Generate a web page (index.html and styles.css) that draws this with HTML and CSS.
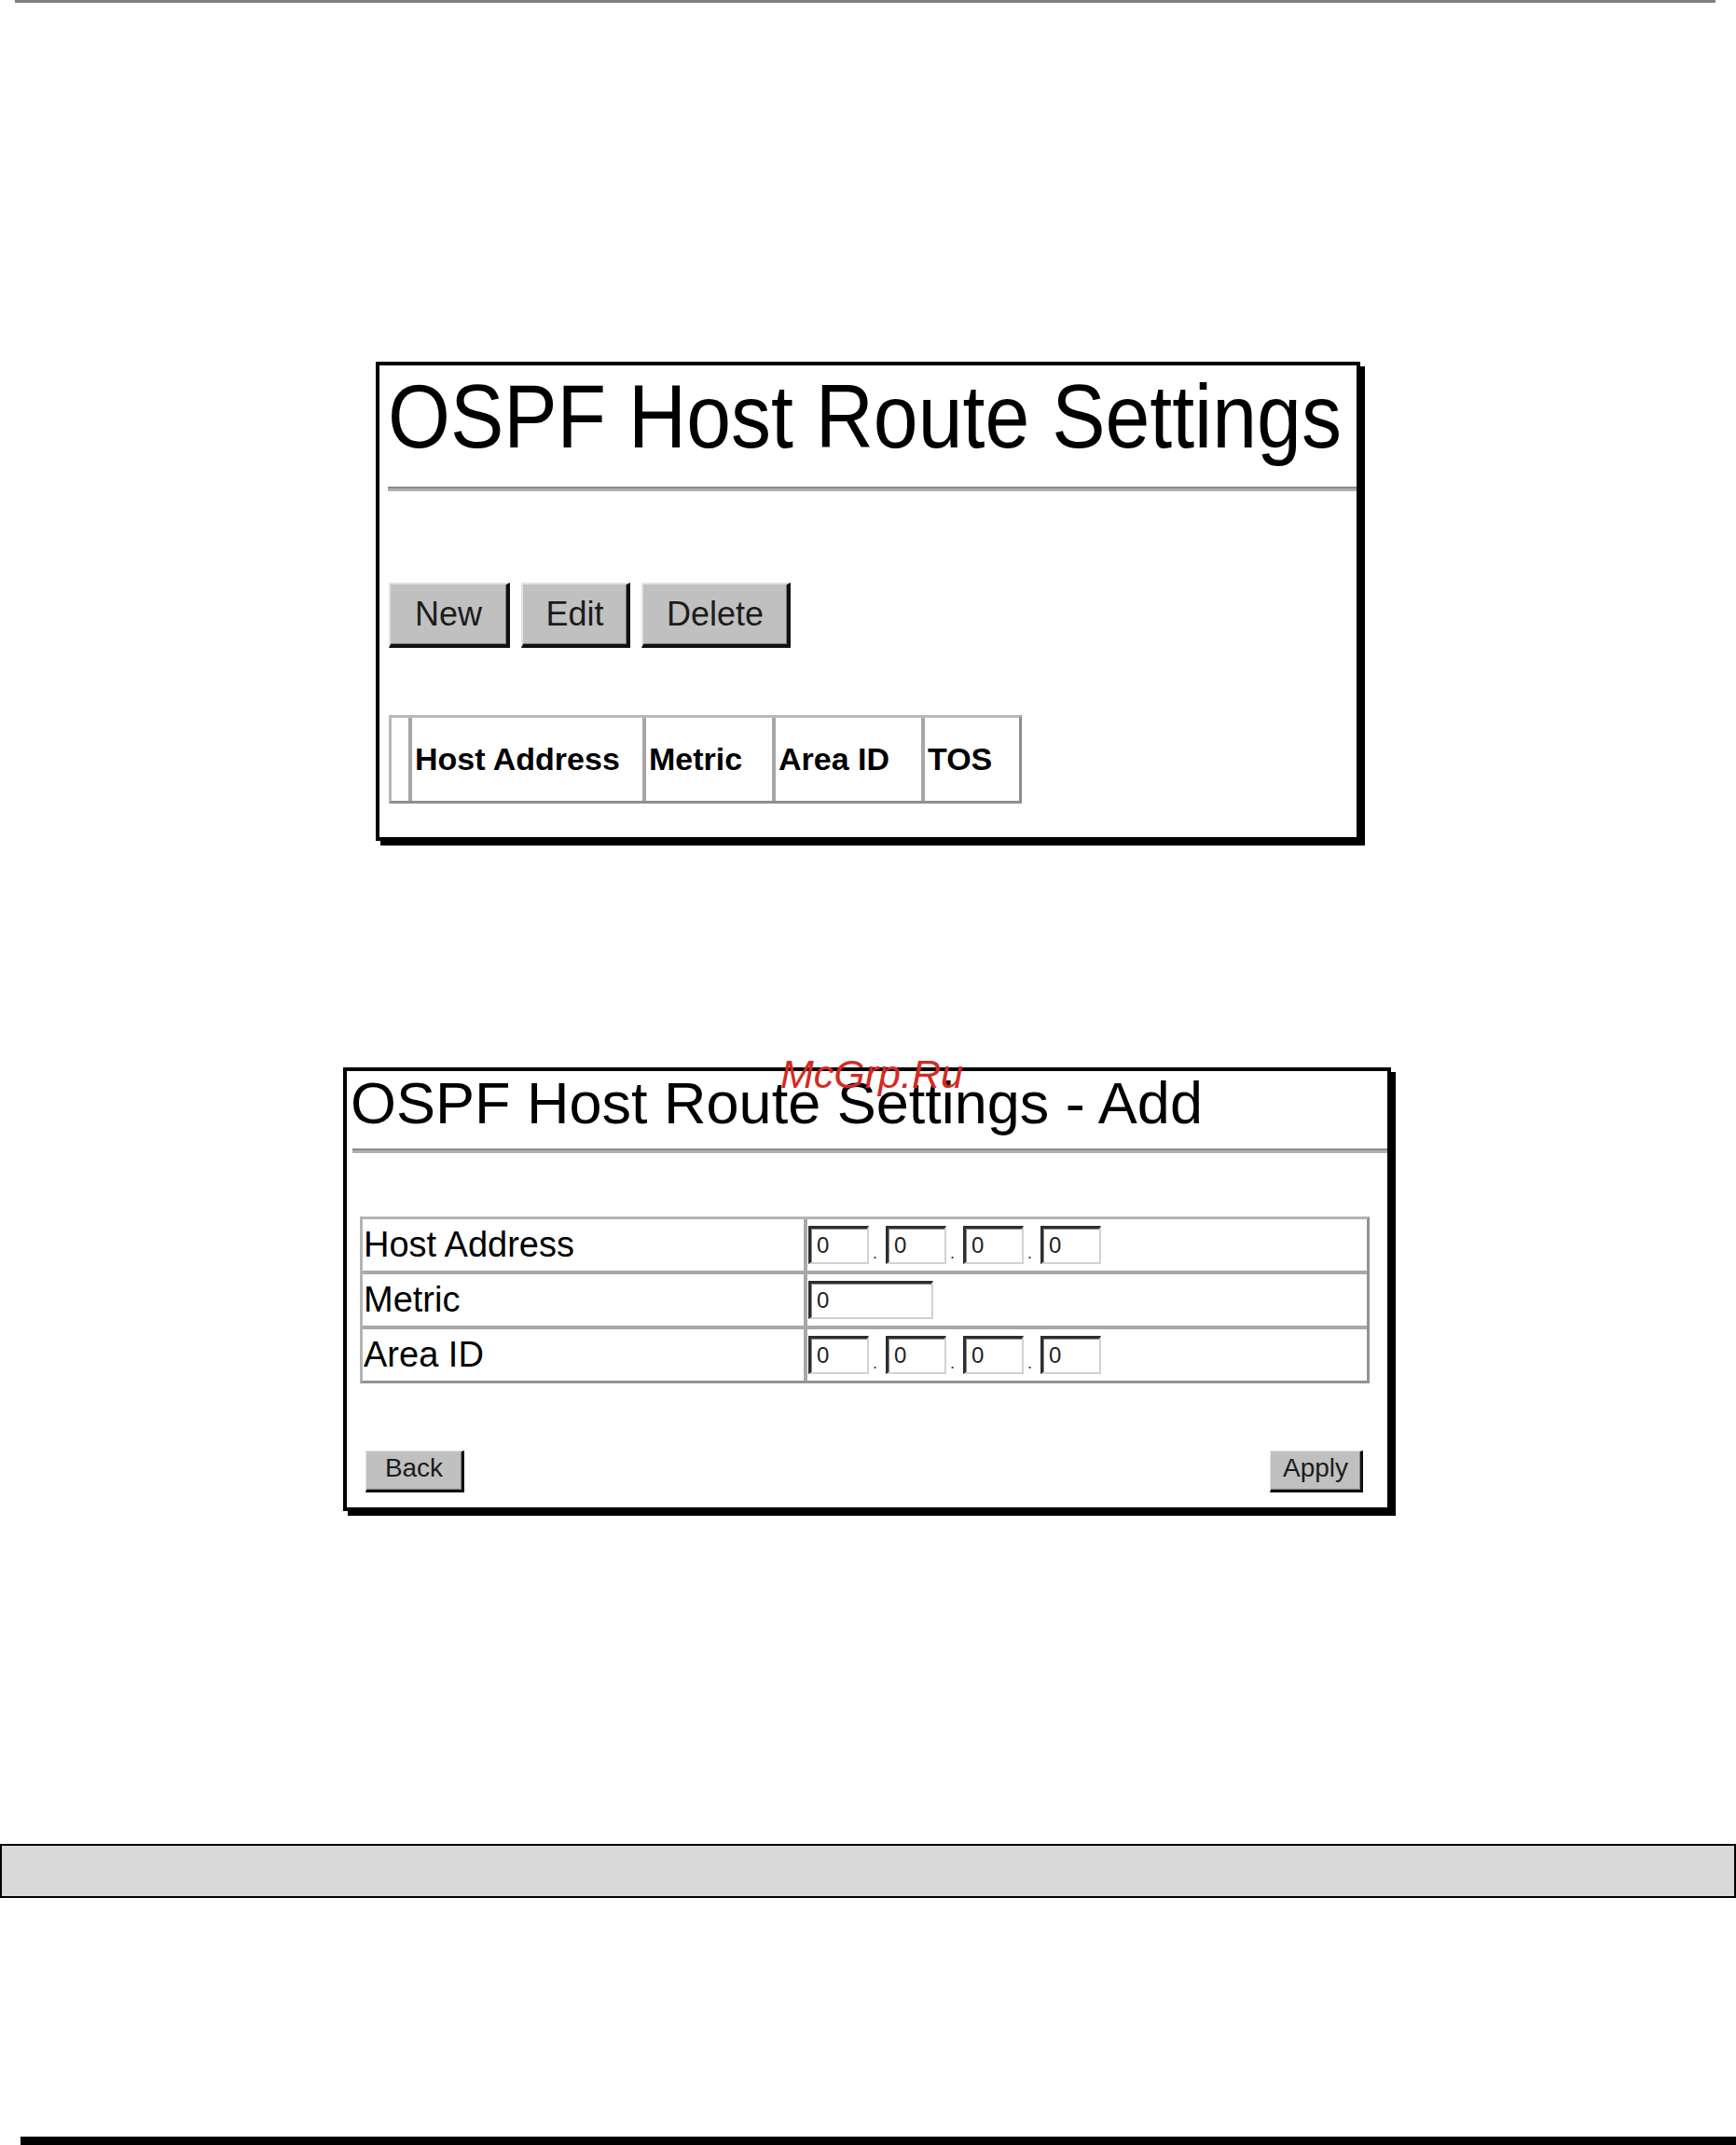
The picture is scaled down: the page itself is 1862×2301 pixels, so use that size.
FILE: index.html
```html
<!DOCTYPE html>
<html lang="en">
<head>
<meta charset="utf-8">
<title>OSPF Host Route Settings</title>
<link rel="stylesheet" href="styles.css">
</head>
<body>
<div class="page">
  <div class="top-rule"></div>

  <section class="panel panel-main">
    <h1 class="title-main"><span>OSPF Host Route Settings</span></h1>
    <div class="rule rule-main"></div>
    <div class="toolbar">
      <button class="btn btn-lg btn-new">New</button>
      <button class="btn btn-lg btn-edit">Edit</button>
      <button class="btn btn-lg btn-delete">Delete</button>
    </div>
    <div class="hdr-table">
      <div class="hcell hc0"></div>
      <div class="hcell hc1">Host Address</div>
      <div class="hcell hc2">Metric</div>
      <div class="hcell hc3">Area ID</div>
      <div class="hcell hc4">TOS</div>
    </div>
  </section>

  <section class="panel panel-add">
    <h2 class="title-add">OSPF Host Route Settings - Add</h2>
    <div class="rule rule-add"></div>
    <div class="form-table">
      <div class="lbl first">Host Address</div>
      <div class="val first">
        <input class="ip-in" type="text" value="0"><span class="sep">.</span><input class="ip-in" type="text" value="0"><span class="sep">.</span><input class="ip-in" type="text" value="0"><span class="sep">.</span><input class="ip-in" type="text" value="0">
      </div>
      <div class="lbl">Metric</div>
      <div class="val">
        <input class="ip-in metric-in" type="text" value="0">
      </div>
      <div class="lbl">Area ID</div>
      <div class="val">
        <input class="ip-in" type="text" value="0"><span class="sep">.</span><input class="ip-in" type="text" value="0"><span class="sep">.</span><input class="ip-in" type="text" value="0"><span class="sep">.</span><input class="ip-in" type="text" value="0">
      </div>
    </div>
    <div class="actions">
      <button class="btn btn-sm btn-back">Back</button>
      <button class="btn btn-sm btn-apply">Apply</button>
    </div>
  </section>

  <div class="gray-bar"></div>
  <div class="bottom-bar"></div>

  <div class="watermark">McGrp.Ru</div>
</div>
</body>
</html>
```

FILE: styles.css
```css
* { box-sizing: border-box; }

html, body {
  margin: 0;
  padding: 0;
  background: #ffffff;
}

body {
  font-family: "Liberation Sans", Arial, sans-serif;
  color: #000;
}

.page {
  position: relative;
  width: 1862px;
  height: 2301px;
  overflow: hidden;
  display: flex;
  flex-direction: column;
  align-items: flex-start;
}

.top-rule {
  margin-left: 16px;
  width: 1824px;
  height: 3px;
  background: #808080;
  flex: none;
}

/* ---------- panels ---------- */
.panel {
  flex: none;
  border: 4px solid #000;
  box-shadow: 5px 5px 0 #000;
  background: #fff;
  display: flex;
  flex-direction: column;
  align-items: flex-start;
}

.panel-main {
  margin-top: 385px;
  margin-left: 403px;
  width: 1056px;
  height: 514px;
}

.panel-add {
  margin-top: 243px;
  margin-left: 368px;
  width: 1124px;
  height: 476px;
}

.rule {
  height: 5px;
  border-top: 2px solid #8a8a8a;
  border-bottom: 3px solid #b0b0b0;
  align-self: stretch;
}

/* ---------- main panel ---------- */
.title-main {
  margin: 15px 0 0 9px;
  font-size: 86px;
  line-height: 86px;
  height: 86px;
  font-weight: normal;
  white-space: nowrap;
}

.title-main span {
  display: inline-block;
  transform: scaleY(1.12);
  transform-origin: 0 73px;
}

.rule-main {
  margin: 29px 0 0 9px;
}

.toolbar {
  margin: 98px 0 0 10px;
  display: flex;
  gap: 12px;
}

.btn {
  font-family: "Liberation Sans", Arial, sans-serif;
  background: #c0c0c0;
  color: #1c1c1c;
  border-style: solid;
  padding: 0;
  margin: 0;
  display: flex;
  align-items: center;
  justify-content: center;
}

.btn-lg {
  height: 70px;
  font-size: 36px;
  border-width: 2px 4px 4px 2px;
  border-color: #e2e2e2 #111 #111 #e2e2e2;
  box-shadow: inset -1px -1px 0 #7c7c7c;
}

.btn-new { width: 130px; }
.btn-edit { width: 117px; }
.btn-delete { width: 160px; }

.hdr-table {
  margin: 72px 0 0 10px;
  width: 679px;
  height: 95px;
  display: flex;
  border: 3px solid;
  border-color: #b8b8b8 #8e8e8e #8e8e8e #b8b8b8;
}

.hcell {
  height: 100%;
  display: flex;
  align-items: center;
  padding-left: 3px;
  font-size: 34px;
  font-weight: bold;
  white-space: nowrap;
  border-left: 4px solid #a6a6a6;
}

.hc0 { width: 18px; border-left: none; padding: 0; }
.hc1 { width: 251px; }
.hc2 { width: 139px; }
.hc3 { width: 160px; }
.hc4 { width: 105px; }

/* ---------- add panel ---------- */
.title-add {
  margin: 3px 0 0 0;
  padding-left: 4px;
  font-size: 63px;
  line-height: 63px;
  height: 63px;
  font-weight: normal;
  white-space: nowrap;
}

.rule-add {
  margin: 17px 0 0 6px;
}

.form-table {
  margin: 68px 0 0 14px;
  width: 1083px;
  display: grid;
  grid-template-columns: 473px 604px;
  border: 3px solid;
  border-color: #b4b4b4 #939393 #939393 #b4b4b4;
}

.lbl,
.val {
  height: 59px;
  border-top: 4px solid #a8a8a8;
}

.lbl.first,
.val.first {
  height: 55px;
  border-top: none;
}

.lbl {
  font-size: 38px;
  line-height: 55px;
  padding-left: 1px;
  white-space: nowrap;
}

.val {
  border-left: 4px solid #a8a8a8;
  padding-left: 1px;
  display: flex;
  align-items: center;
}

.ip-in {
  width: 65px;
  height: 41px;
  margin: 0;
  padding: 0 0 0 6px;
  font-family: "Liberation Sans", Arial, sans-serif;
  font-size: 24px;
  color: #222;
  background: #fff;
  border-style: solid;
  border-width: 3px 2px 2px 3px;
  border-color: #2e2e2e #d2d2d2 #d2d2d2 #2e2e2e;
  box-shadow: inset 1px 1px 0 #8a8a8a;
  outline: none;
}

.metric-in { width: 134px; }

.sep {
  width: 18px;
  height: 41px;
  padding-left: 4px;
  font-size: 18px;
  line-height: 1;
  color: #333;
  display: flex;
  align-items: flex-end;
  padding-bottom: 3px;
}

.actions {
  margin-top: 72px;
  align-self: stretch;
  display: flex;
  justify-content: space-between;
  padding: 0 26px 0 20px;
}

.btn-sm {
  height: 45px;
  font-size: 28px;
  border-width: 1px 3px 3px 1px;
  border-color: #e4e4e4 #111 #111 #e4e4e4;
  box-shadow: inset -1px -1px 0 #808080;
  padding-bottom: 6px;
}

.btn-back { width: 106px; }
.btn-apply { width: 100px; }

/* ---------- bottom bars ---------- */
.gray-bar {
  flex: none;
  margin-top: 357px;
  width: 1862px;
  height: 58px;
  background: #d9d9d9;
  border: 2px solid #000;
}

.bottom-bar {
  flex: none;
  margin-top: 256px;
  margin-left: 22px;
  width: 1840px;
  height: 9px;
  background: #000;
}

/* ---------- watermark overlay ---------- */
.watermark {
  position: absolute;
  left: 837px;
  top: 1131px;
  font-size: 43px;
  line-height: 43px;
  font-style: italic;
  color: #d42a22;
  white-space: nowrap;
}
```
